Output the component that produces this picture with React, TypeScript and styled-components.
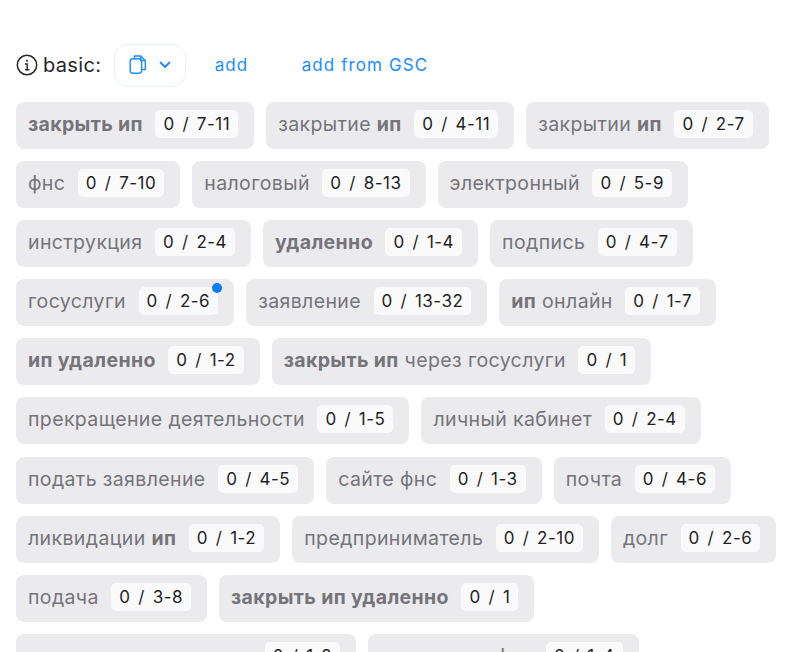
import React from 'react';
import styled, { createGlobalStyle } from 'styled-components';

const GlobalStyle = createGlobalStyle`
  html, body {
    margin: 0;
    padding: 0;
    background: #fff;
    height: 652px;
    overflow: hidden;
    font-family: Inter, "Noto Sans", sans-serif;
  }
`;

const Page = styled.div`
  width: 800px;
  height: 652px;
  overflow: hidden;
  box-sizing: border-box;
  padding: 44px 16px 0;
`;

const Toolbar = styled.div`
  display: flex;
  align-items: center;
  height: 43px;
  margin-bottom: 15px;
`;

const Label = styled.div`
  display: flex;
  align-items: center;
  gap: 5px;
  width: 98px;
  margin-bottom: 2px;
  font-size: 20px;
  letter-spacing: 0.35px;
  color: #26262b;
  line-height: 40px;
`;

const CopyButton = styled.button`
  display: flex;
  align-items: center;
  gap: 12px;
  height: 43px;
  width: 72px;
  box-sizing: border-box;
  padding: 0 14px 2px;
  background: #fff;
  border: 1px solid #e3efff;
  border-radius: 14px;
  color: #1a8cff;
`;

const LinkButton = styled.a<{ $width: number }>`
  width: ${(p) => p.$width}px;
  margin-bottom: 2px;
  text-align: center;
  font-size: 17px;
  letter-spacing: 1.1px;
  color: #1a8cff;
`;

const Tags = styled.div`
  display: flex;
  flex-wrap: wrap;
  gap: 12.1px 12px;
`;

const Tag = styled.div`
  display: flex;
  align-items: center;
  gap: 12.5px;
  height: 47px;
  box-sizing: border-box;
  padding: 0 16px 3px 12px;
  background: #ebebed;
  border-radius: 8px;
  font-size: 19.5px;
  letter-spacing: 0.38px;
  color: #74747a;
  white-space: nowrap;
`;

const Bold = styled.b`
  font-weight: 700;
`;

const Count = styled.div`
  position: relative;
  display: flex;
  align-items: center;
  height: 28px;
  padding: 0 8px;
  background: #fafafa;
  border-radius: 5px;
  font-size: 17px;
  letter-spacing: 0.5px;
  word-spacing: 2.5px;
  color: #1f1f24;
`;

const Dot = styled.span`
  position: absolute;
  top: -4px;
  right: -4px;
  width: 10px;
  height: 10px;
  border-radius: 50%;
  background: #0a7cf5;
`;

type Part = { text: string; bold?: boolean };
type Item = { parts: Part[]; count: string; dot?: boolean };

const n = (text: string): Part => ({ text });
const b = (text: string): Part => ({ text, bold: true });

const items: Item[] = [
  { parts: [b('закрыть ип')], count: '0 / 7-11' },
  { parts: [n('закрытие '), b('ип')], count: '0 / 4-11' },
  { parts: [n('закрытии '), b('ип')], count: '0 / 2-7' },
  { parts: [n('фнс')], count: '0 / 7-10' },
  { parts: [n('налоговый')], count: '0 / 8-13' },
  { parts: [n('электронный')], count: '0 / 5-9' },
  { parts: [n('инструкция')], count: '0 / 2-4' },
  { parts: [b('удаленно')], count: '0 / 1-4' },
  { parts: [n('подпись')], count: '0 / 4-7' },
  { parts: [n('госуслуги')], count: '0 / 2-6', dot: true },
  { parts: [n('заявление')], count: '0 / 13-32' },
  { parts: [b('ип'), n(' онлайн')], count: '0 / 1-7' },
  { parts: [b('ип удаленно')], count: '0 / 1-2' },
  { parts: [b('закрыть ип'), n(' через госуслуги')], count: '0 / 1' },
  { parts: [n('прекращение деятельности')], count: '0 / 1-5' },
  { parts: [n('личный кабинет')], count: '0 / 2-4' },
  { parts: [n('подать заявление')], count: '0 / 4-5' },
  { parts: [n('сайте фнс')], count: '0 / 1-3' },
  { parts: [n('почта')], count: '0 / 4-6' },
  { parts: [n('ликвидации '), b('ип')], count: '0 / 1-2' },
  { parts: [n('предприниматель')], count: '0 / 2-10' },
  { parts: [n('долг')], count: '0 / 2-6' },
  { parts: [n('подача')], count: '0 / 3-8' },
  { parts: [b('закрыть ип удаленно')], count: '0 / 1' },
  { parts: [n('закрытие организации')], count: '0 / 1-2' },
  { parts: [n('закрытие в фнс')], count: '0 / 1-4' },
];

const InfoIcon = () => (
  <svg width="22" height="22" viewBox="0 0 22 22" fill="none" stroke="#26262b" strokeWidth="1.5">
    <circle cx="11" cy="11" r="9.7" />
    <path d="M9 10h2.2v5.5M9 15.8h4.4" strokeWidth="1.4" />
    <circle cx="11" cy="6.8" r="1" fill="#26262b" stroke="none" />
  </svg>
);

const CopyIcon = () => (
  <svg width="18" height="19" viewBox="0 0 18 19" fill="none" stroke="currentColor" strokeWidth="1.4" strokeLinejoin="round">
    <path d="M5.5 3.5V1h6.3l4.5 4.5v9h-3.3" />
    <path d="M11.6 1v4.6h4.7" />
    <rect x="1.2" y="3.8" width="11.4" height="14.4" rx="2.6" />
  </svg>
);

const ChevronIcon = () => (
  <svg width="12" height="8" viewBox="0 0 12 8" fill="none" stroke="currentColor" strokeWidth="1.8" strokeLinecap="round" strokeLinejoin="round">
    <path d="M1.5 1.5 6 6l4.5-4.5" />
  </svg>
);

export default function App() {
  return (
    <Page>
      <GlobalStyle />
      <Toolbar>
        <Label>
          <InfoIcon />
          basic:
        </Label>
        <CopyButton>
          <CopyIcon />
          <ChevronIcon />
        </CopyButton>
        <LinkButton $width={91}>add</LinkButton>
        <LinkButton $width={176}>add from GSC</LinkButton>
      </Toolbar>
      <Tags>
        {items.map((item) => (
          <Tag key={item.count + item.parts[0].text}>
            <span>
              {item.parts.map((part) =>
                part.bold ? <Bold key={part.text}>{part.text}</Bold> : <span key={part.text}>{part.text}</span>
              )}
            </span>
            <Count>
              {item.count}
              {item.dot && <Dot />}
            </Count>
          </Tag>
        ))}
      </Tags>
    </Page>
  );
}
